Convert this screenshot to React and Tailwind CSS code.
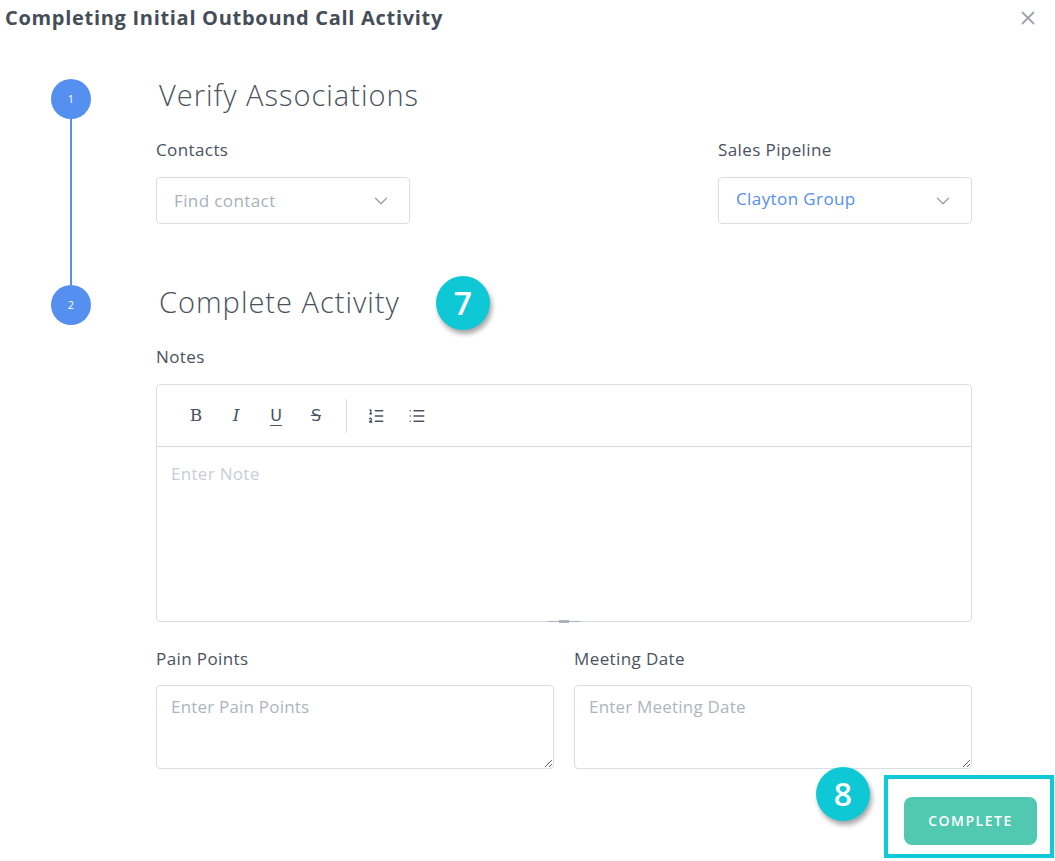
import React from "react";
import { X, ChevronDown, ListOrdered, List } from "lucide-react";

function Circle({ n }) {
  return (
    <div className="w-[40px] h-[40px] shrink-0 rounded-full bg-[#5590f0] text-white text-[11px] flex items-center justify-center">
      {n}
    </div>
  );
}

function Badge({ n }) {
  return (
    <div className="w-[54px] h-[54px] shrink-0 rounded-full bg-[#0fc8d6] text-white text-[32px] font-semibold flex items-center justify-center shadow-[2px_4px_5px_rgba(0,0,0,0.35)]">
      {n}
    </div>
  );
}

function Select({ value, placeholder }) {
  return (
    <div className="w-[254px] h-[47px] border border-[#dadee4] rounded-[4px] flex items-center justify-between pl-[17px] pr-[17px]">
      {value ? (
        <span className="text-[17px] tracking-[0.4px] text-[#5590f0] -mt-[3px]">{value}</span>
      ) : (
        <span className="text-[17px] tracking-[0.4px] text-[#a9b0ba]">{placeholder}</span>
      )}
      <ChevronDown size={22} strokeWidth={1.5} className="text-[#9aa1ab]" />
    </div>
  );
}

export default function App() {
  return (
    <div className="w-[1055px] h-[861px] overflow-hidden bg-white text-[#4a5260] font-['Open_Sans',sans-serif]">
      {/* HEADER */}
      <div className="h-[36px] flex items-center justify-between pl-[5px] pr-[16px]">
        <h1 className="text-[20px] font-bold tracking-[0.7px] text-[#454d59]">Completing Initial Outbound Call Activity</h1>
        <X size={22} strokeWidth={2} className="text-[#a0a5ad]" />
      </div>

      {/* STEP 1 */}
      <div className="mt-[43px] flex">
        <div className="w-[40px] ml-[51px] flex flex-col items-center">
          <Circle n="1" />
          <div className="w-[1.5px] flex-1 bg-[#5590f0]" />
        </div>
        <div className="ml-[65px] w-[816px] pb-[61px]">
          <div className="h-[40px] flex items-center pl-[3px]">
            <h2 className="text-[29px] tracking-[1px] font-light leading-none -mt-[10px]">Verify Associations</h2>
          </div>
          <div className="mt-[21px] flex justify-between">
            <div>
              <div className="text-[17px] tracking-[0.4px] leading-[20px]">Contacts</div>
              <div className="mt-[17px]">
                <Select placeholder="Find contact" />
              </div>
            </div>
            <div>
              <div className="text-[17px] tracking-[0.4px] leading-[20px]">Sales Pipeline</div>
              <div className="mt-[17px]">
                <Select value="Clayton Group" />
              </div>
            </div>
          </div>
        </div>
      </div>

      {/* STEP 2 */}
      <div className="flex">
        <div className="w-[40px] ml-[51px] flex flex-col items-center">
          <Circle n="2" />
        </div>
        <div className="ml-[65px] w-[816px]">
          <div className="h-[40px] flex items-center pl-[3px]">
            <h2 className="text-[29px] tracking-[1px] font-light leading-none -mt-[8px]">Complete Activity</h2>
            <div className="ml-[36px] -my-[10px] -mt-[14px]">
              <Badge n="7" />
            </div>
          </div>

          <div className="mt-[22px] text-[17px] tracking-[0.4px] leading-[20px]">Notes</div>
          <div className="mt-[17px] h-[238px] border border-[#dadee4] rounded-[4px] flex flex-col relative">
            <div className="h-[62px] border-b border-[#dadee4] flex items-center pl-[22px] text-[#4a5260]">
              <span className="w-[40px] text-center font-['DejaVu_Serif',serif] text-[17px] -ml-[3px]">B</span>
              <span className="w-[40px] text-center font-['DejaVu_Serif',serif] italic text-[17px]">I</span>
              <span className="w-[40px] text-center font-['DejaVu_Sans',sans-serif] underline underline-offset-[4px] text-[16px]">U</span>
              <span className="w-[40px] text-center font-['DejaVu_Sans',sans-serif] line-through text-[16px]">S</span>
              <div className="w-px h-[34px] bg-[#dadee4] ml-[10px] mr-[20px]" />
              <ListOrdered size={18} strokeWidth={1.8} />
              <List size={18} strokeWidth={1.8} className="ml-[23px]" />
            </div>
            <div className="flex-1 pl-[14px] pt-[14px] text-[17px] tracking-[0.3px] text-[#c9ced5]">Enter Note</div>
            <div className="absolute -bottom-[2px] left-0 right-0 flex justify-center">
              <div className="w-[34px] h-[3px] flex items-center">
                <div className="flex-1 h-px bg-[#aab1bb]" />
                <div className="w-[10px] h-[3px] bg-[#aab1bb]" />
                <div className="flex-1 h-px bg-[#aab1bb]" />
              </div>
            </div>
          </div>

          <div className="mt-[27px] grid grid-cols-2 gap-[20px]">
            <div>
              <div className="text-[17px] tracking-[0.4px] leading-[20px]">Pain Points</div>
              <textarea
                placeholder="Enter Pain Points"
                className="mt-[16px] block w-full h-[84px] border border-[#dadee4] rounded-[4px] px-[14px] pt-[8px] text-[17px] tracking-[0.2px] placeholder-[#aeb5bf] outline-none resize-y"
              />
            </div>
            <div>
              <div className="text-[17px] tracking-[0.4px] leading-[20px]">Meeting Date</div>
              <textarea
                placeholder="Enter Meeting Date"
                className="mt-[16px] block w-full h-[84px] border border-[#dadee4] rounded-[4px] px-[14px] pt-[8px] text-[17px] tracking-[0.2px] placeholder-[#aeb5bf] outline-none resize-y"
              />
            </div>
          </div>
        </div>
      </div>

      {/* FOOTER */}
      <div className="mt-[6px] flex justify-end items-start pr-[1px]">
        <div className="mr-[14px] -mt-[8px]">
          <Badge n="8" />
        </div>
        <div className="w-[170px] h-[83px] border-[4px] border-[#10c9d8] flex items-center justify-center">
          <button className="w-[133px] h-[48px] mt-[8px] rounded-[8px] bg-[#50c9b0] text-white text-[14px] font-semibold tracking-[1.5px] ml-[3px]">
            COMPLETE
          </button>
        </div>
      </div>
    </div>
  );
}
